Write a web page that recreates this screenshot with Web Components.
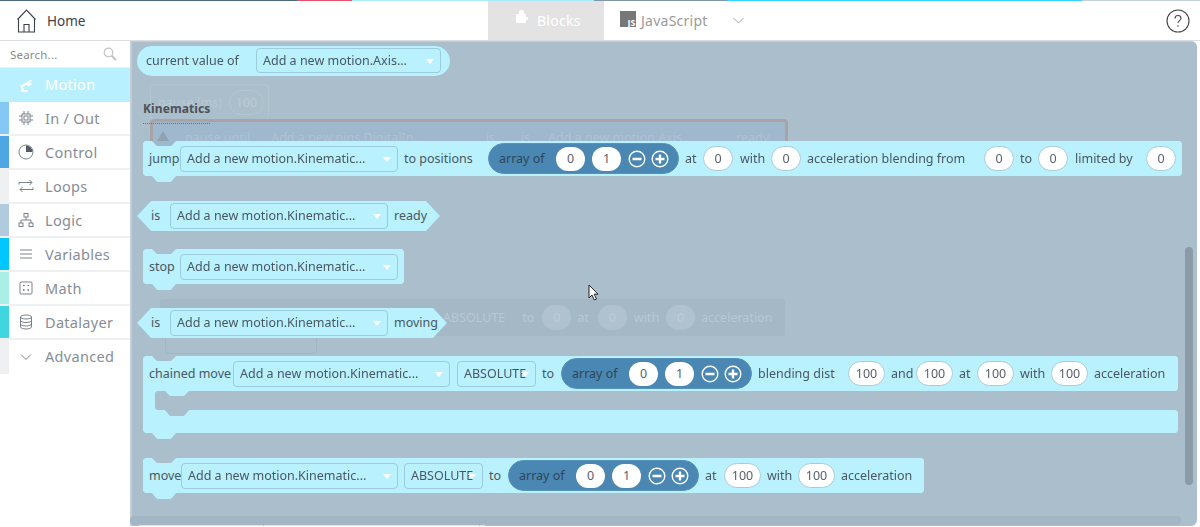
<!DOCTYPE html>
<html><head><meta charset="utf-8"><style>
html,body{margin:0;height:100%;overflow:hidden;background:#fff;font-family:"Noto Sans","Liberation Sans",sans-serif}
</style></head><body>
<x-app>
<x-stripe slot="top"></x-stripe>
<x-header slot="top"></x-header>
<x-sidebar slot="side">
  <x-search></x-search>
  <x-cat active color="#b9f0ff" icon="motion">Motion</x-cat>
  <x-cat color="#85c8f5" icon="chip">In / Out</x-cat>
  <x-cat color="#4ea6e3" icon="clock">Control</x-cat>
  <x-cat color="#eef0f1" icon="loop">Loops</x-cat>
  <x-cat color="#b2cade" icon="tree">Logic</x-cat>
  <x-cat color="#00c8ff" icon="lines">Variables</x-cat>
  <x-cat color="#a9efe6" icon="calc">Math</x-cat>
  <x-cat color="#3fd6e0" icon="db">Datalayer</x-cat>
  <x-cat last color="#eef0f1" icon="chev">Advanced</x-cat>
</x-sidebar>
<x-canvas slot="main">
  <x-ghost style="left:20px;top:43px;width:119px;height:36px;border:1px solid #b3c4d1;border-radius:4px"><span style="margin-left:7px">pause (ms)</span><x-num w="35" style="background:transparent;border-color:#b5c5d1;color:#bccad5;margin-left:7px">100</x-num></x-ghost>
  <x-ghost style="left:20px;top:78px;width:638px;height:40px;border:3px solid #a9a3a6;border-radius:4px;background:#9fb8cd;align-items:flex-start;padding-top:7px;color:#aec3d3"><svg width="12" height="10" viewBox="0 0 12 10" style="margin:2px 0 0 4px"><path d="M6 0 12 10H0z" fill="#8fa3b3"/></svg><span style="margin-left:16px">pause until</span><span style="margin-left:21px">Add a new pins.DigitalIn...</span><span style="margin-left:62px">is</span><span style="margin-left:26px">is</span><span style="margin-left:18px">Add a new motion.Axis...</span><span style="margin-left:44px">ready</span></x-ghost>
  <x-ghost style="left:30px;top:258px;width:625px;height:37px;background:#a5b8c6;border-radius:3px"><span style="margin-left:283px">ABSOLUTE</span><span style="margin-left:17px">to</span><x-num w="29" style="background:#b0c2cf;border:0;color:#bfcdd8;margin-left:8px">0</x-num><span style="margin-left:6px">at</span><x-num w="29" style="background:#b0c2cf;border:0;color:#bfcdd8;margin-left:9px">0</x-num><span style="margin-left:7px">with</span><x-num w="29" style="background:#b0c2cf;border:0;color:#bfcdd8;margin-left:7px">0</x-num><span style="margin-left:6px">acceleration</span></x-ghost>
  <x-ghost style="left:35px;top:295px;width:152px;height:18px;border:1px solid #a2b5c3;border-radius:0 0 4px 4px;border-top:0"></x-ghost>

  <x-block type="pill" x="7" y="5" w="313" h="30">
    <span style="margin-left:9px;width:110px">current value of</span><x-drop w="185" h="25">Add a new motion.Axis...</x-drop>
  </x-block>
  <x-label style="left:13px;top:60px">Kinematics</x-label>

  <x-block type="stack" x="13" y="100" w="1039" h="41">
    <span style="margin-left:6px;width:31px">jump</span><x-drop w="218">Add a new motion.Kinematic...</x-drop>
    <span style="margin-left:6px;width:84px">to positions</span>
    <x-array></x-array>
    <span style="margin-left:6px;width:18px">at</span><x-num w="30">0</x-num>
    <span style="margin-left:7px;width:31px">with</span><x-num w="30">0</x-num>
    <span style="margin-left:6px;width:177px">acceleration blending from</span><x-num w="30">0</x-num>
    <span style="margin-left:6px;width:18px">to</span><x-num w="30">0</x-num>
    <span style="margin-left:7px;width:71px">limited by</span><x-num w="30">0</x-num>
  </x-block>

  <x-block type="hex" x="7" y="160" w="303" h="30">
    <span style="margin-left:14px;width:19px">is</span><x-drop w="218">Add a new motion.Kinematic...</x-drop><span style="margin-left:6px">ready</span>
  </x-block>

  <x-block type="stack" x="13" y="208" w="261" h="41">
    <span style="margin-left:6px;width:31px">stop</span><x-drop w="218">Add a new motion.Kinematic...</x-drop>
  </x-block>

  <x-block type="hex" x="7" y="267" w="310" h="30">
    <span style="margin-left:14px;width:19px">is</span><x-drop w="218">Add a new motion.Kinematic...</x-drop><span style="margin-left:6px">moving</span>
  </x-block>

  <x-block type="c" x="13" y="315" w="1035" h="83">
    <span style="margin-left:6px;width:84px">chained move</span><x-drop w="217">Add a new motion.Kinematic...</x-drop>
    <x-drop w="79" style="margin-left:7px">ABSOLUTE</x-drop>
    <span style="margin-left:6px;width:19px">to</span>
    <x-array></x-array>
    <span style="margin-left:6px;width:90px">blending dist</span><x-num w="37">100</x-num>
    <span style="margin-left:6px;width:25px">and</span><x-num w="37">100</x-num>
    <span style="margin-left:6px;width:18px">at</span><x-num w="37">100</x-num>
    <span style="margin-left:6px;width:31px">with</span><x-num w="37">100</x-num>
    <span style="margin-left:6px">acceleration</span>
  </x-block>

  <x-block type="stack" x="13" y="417" w="781" h="41">
    <span style="margin-left:6px;width:32px">move</span><x-drop w="217">Add a new motion.Kinematic...</x-drop>
    <x-drop w="79" style="margin-left:6px">ABSOLUTE</x-drop>
    <span style="margin-left:6px;width:19px">to</span>
    <x-array></x-array>
    <span style="margin-left:6px;width:19px">at</span><x-num w="37">100</x-num>
    <span style="margin-left:6px;width:31px">with</span><x-num w="37">100</x-num>
    <span style="margin-left:6px">acceleration</span>
  </x-block>

  <x-block type="pill" x="7" y="477" w="350" h="30">
    <span style="margin-left:9px;width:117px"></span><x-drop w="217" h="25"></x-drop>
  </x-block>

  <x-scrollbars></x-scrollbars>
  <x-cursor style="left:458px;top:243px"></x-cursor>
</x-canvas>
</x-app>
<script>
function def(name, css, html){
  customElements.define(name, class extends HTMLElement{
    constructor(){super();this.attachShadow({mode:'open'});}
    connectedCallback(){
      const h = typeof html==='function'?html(this):html;
      const c = typeof css==='function'?css(this):css;
      this.shadowRoot.innerHTML='<style>'+c+'</style>'+h;
    }
  });
}
def('x-app',`:host{display:grid;grid-template-columns:130px 1fr;grid-template-rows:41px 1fr;width:1200px;height:527px;overflow:hidden}
 .t{grid-column:1/3;display:flex;flex-direction:column}.s{min-height:0}.m{min-height:0;min-width:0}`,
 `<div class="t"><slot name="top"></slot></div><div class="s"><slot name="side"></slot></div><div class="m"><slot name="main"></slot></div>`);
def('x-stripe',`:host{display:flex;height:1px;flex:none}i{display:block;height:1px}`,
 [['#4a6b80',297],['#e8506a',55],['#a8ecfb',242],['#7f98a8',133],['#35d3ff',355],['#c2d0d8',118]].map(a=>`<i style="background:${a[0]};width:${a[1]}px"></i>`).join(''));
def('x-header',`:host{display:flex;align-items:stretch;height:39px;background:#fff;border-bottom:1px solid #d9dde0;color:#3c4248;font-size:13.5px}
 .home{display:flex;align-items:center;width:488px;box-sizing:border-box;padding-left:16px}
 .home svg{margin-right:10px}
 .tab{display:flex;align-items:center;box-sizing:border-box;font-size:14px;letter-spacing:.25px}
 .b{width:116px;background:#e3e3e3;color:#fff;padding-left:28px;gap:9px}
 .j{color:#9b9b9b;padding-left:16px;width:152px;gap:5px}
 .j .c{margin-left:20px}
 .sp{flex:1}.q{display:flex;align-items:center;padding-right:10px}`,
 `<div class="home"><svg width="21" height="24" viewBox="0 0 21 24" fill="none" stroke="#3c4248" stroke-width="1.1"><path d="M1.5 10.5 10.5 1l9 9.5M2.5 9.5V23h16V9.500M8 23v-7.500h5V23"/></svg><span>Home</span></div>
 <div class="tab b"><svg width="12" height="15" viewBox="0 0 12 15" fill="#fff" style="margin-top:-6px"><path d="M0 4h3c-.6-2 .4-4 2.500-4S8.600 2 8 4h2v3.200c1.500-.6 2 .6 2 1.300s-.5 1.900-2 1.300V13H0z"/></svg><span>Blocks</span></div>
 <div class="tab j"><svg width="16" height="16" viewBox="0 0 16 16" style="margin-top:-4px"><rect width="16" height="16" fill="#777"/><text x="15.500" y="14.500" text-anchor="end" font-size="9" font-weight="700" font-family="Noto Sans" fill="#fff" letter-spacing="0">JS</text></svg><span>JavaScript</span>
 <svg class="c" width="11" height="7" viewBox="0 0 11 7" fill="none" stroke="#a6a6a6"><path d="M.5 1 5.500 6l5-5"/></svg></div>
 <div class="sp"></div>
 <div class="q"><svg width="24" height="24" viewBox="0 0 24 24"><circle cx="12" cy="12" r="11" fill="none" stroke="#444" stroke-width="1.100"/><path d="M9 9.500c0-2 1.300-3 3-3s3 1 3 2.800c0 2.200-3 2.400-3 4.700" fill="none" stroke="#444" stroke-width="1.100"/><circle cx="12" cy="17" r=".8" fill="#444"/></svg></div>`);
def('x-sidebar',`:host{display:block;height:100%;background:#fff}`,`<slot></slot>`);
def('x-search',`:host{display:flex;align-items:center;justify-content:space-between;height:27px;box-sizing:border-box;padding:0 13px 0 10px;font-size:11.500px;color:#8c8c8c;letter-spacing:.2px;border-bottom:1px solid #eee}`,
 `<span>Search...</span><svg width="14" height="14" viewBox="0 0 14 14" fill="none" stroke="#c4c4c4" stroke-width="1.200"><circle cx="5.500" cy="5.500" r="4.300"/><path d="M8.700 8.700 13 13" stroke-width="2"/></svg>`);
const ICONS={
 motion:'<path d="M3 14h6.500M5 13 3.500 9.500 9.500 6l1.500 3M3.500 9.500 5 12.500M9.500 6 13 3.500M10 8l3.500-1" stroke="#fff" stroke-width="2"/>',
 chip:'<rect x="4" y="4" width="8" height="8"/><rect x="6" y="6" width="4" height="4"/><path d="M1 6h3M1 10h3M12 6h3M12 10h3M6 1v3M10 1v3M6 12v3M10 12v3"/>',
 clock:'<circle cx="8" cy="8" r="7"/><path d="M8 8V1.500A6.500 6.500 0 0 1 14.500 8z" fill="#555c66" stroke="none"/>',
 loop:'<path d="M1 6.500V4.500h13M11.500 2l2.500 2.500L11.500 7M15 9.500v2H2M4.500 14 2 11.500 4.500 9"/>',
 tree:'<rect x="6" y="1.500" width="4" height="3.500"/><rect x="1" y="11" width="4" height="3.500"/><rect x="11" y="11" width="4" height="3.500"/><path d="M8 5v3M3 11V8h10v3"/>',
 lines:'<path d="M2 4h12M2 8h12M2 12h12"/>',
 calc:'<rect x="2" y="2" width="12" height="12" rx="1"/><path d="M5 5.500h1.500M9.500 5.500H11M5 10h1.500M9.500 10H11M5.800 4.800v1.500M5.800 9.300v1.500M10.200 9.300v1.500" stroke-width="1"/>',
 db:'<ellipse cx="8" cy="3" rx="5.500" ry="2"/><path d="M2.500 3v10c0 1 2.500 2 5.500 2s5.500-1 5.500-2V3M2.500 6.500c0 1 2.500 2 5.500 2s5.500-1 5.500-2M2.500 10c0 1 2.500 2 5.500 2s5.500-1 5.500-2"/>',
 chev:'<path d="M3 5.500 8 10.500l5-5"/>'};
def('x-cat',t=>{const a=t.hasAttribute('active'),l=t.hasAttribute('last');return `:host{display:flex;align-items:center;height:34px;box-sizing:border-box;font-size:14.5px;letter-spacing:.3px;color:${a?'#fff':'#868d98'};background:${a?t.getAttribute('color'):'#fff'};border-bottom:${a||l?'0':'2px solid #eef0f1'}}
 .c{width:9px;align-self:stretch;background:${t.getAttribute('color')}}
 svg{margin:0 11px 0 9px;flex:none}
 .t{padding-bottom:${a||l?'2px':'0'}}`},
 t=>`<div class="c"></div><svg width="16" height="16" viewBox="0 0 16 16" fill="none" stroke="#6e7580" stroke-width=".9">${ICONS[t.getAttribute('icon')]}</svg><span class="t"><slot></slot></span>`);
def('x-canvas',`:host{display:block;position:relative;height:calc(100% - 1px);background:#abbecc;box-shadow:inset 2px 1px 0 #c4cdd3;border-radius:0 6px 6px 0;margin-right:3px;overflow:hidden;box-sizing:border-box;font-size:12.5px}`,`<slot></slot>`);
def('x-label',`:host{position:absolute;font-weight:700;font-size:12px;color:#4d5358;border-bottom:1px dotted #66707a;padding-bottom:6px;line-height:16px;letter-spacing:.1px}`,`<slot></slot>`);
def('x-ghost',`:host{position:absolute;display:flex;align-items:center;box-sizing:border-box;color:#b8c8d4;font-size:12.500px;white-space:nowrap}`,`<slot></slot>`);
const SHAPES={
 stack:'polygon(2px 0,9px 0,14px 5px,28px 5px,33px 0,calc(100% - 2px) 0,100% 2px,100% calc(100% - 8px),calc(100% - 2px) calc(100% - 6px),33px calc(100% - 6px),28px 100%,14px 100%,9px calc(100% - 6px),2px calc(100% - 6px),0 calc(100% - 8px),0 2px)',
 hex:'polygon(14px 0,calc(100% - 14px) 0,100% 50%,calc(100% - 14px) 100%,14px 100%,0 50%)',
 c:'polygon(2px 0,9px 0,14px 5px,28px 5px,33px 0,calc(100% - 2px) 0,100% 2px,100% 33px,calc(100% - 2px) 35px,46px 35px,41px 40px,27px 40px,22px 35px,14px 35px,12px 37px,12px 52px,14px 54px,22px 54px,27px 60px,41px 60px,46px 54px,calc(100% - 2px) 54px,100% 56px,100% 75px,calc(100% - 2px) 77px,33px 77px,28px 83px,14px 83px,9px 77px,2px 77px,0 75px,0 2px)',
 pill:'none'};
def('x-block',t=>{const ty=t.getAttribute('type');
 return `:host{position:absolute;left:${t.getAttribute('x')}px;top:${t.getAttribute('y')}px;width:${t.getAttribute('w')}px;height:${t.getAttribute('h')}px;color:#4a5760;filter:drop-shadow(0 0 .6px #86bccf);white-space:nowrap}
 .b{box-sizing:border-box;width:100%;height:100%;background:#b9f1ff;clip-path:${SHAPES[ty]};${ty==='pill'?'border-radius:15px;':''}}
 .r{display:flex;align-items:center;height:${ty==='hex'||ty==='pill'?'calc(100% - 1px)':'35px'}}`},
 `<div class="b"><div class="r"><slot></slot></div></div>`);
def('x-drop',t=>`:host{display:flex;align-items:center;box-sizing:border-box;flex:none;position:relative;width:${t.getAttribute('w')}px;height:${t.getAttribute('h')||26}px;border:1px solid #9bcbdc;border-radius:4px;padding-left:6px;overflow:hidden;white-space:nowrap;color:#4a5760}
 i{position:absolute;right:6px;top:50%;margin-top:-2px;border:4px solid transparent;border-top:5px solid #fff;border-bottom:0}`,`<slot></slot><i></i>`);
def('x-num',t=>`:host{display:flex;align-items:center;justify-content:center;box-sizing:border-box;flex:none;width:${t.getAttribute('w')}px;height:25px;background:#fff;border:1px solid #a7cbd8;border-radius:12.500px;color:#59616a;font-size:12.500px}`,`<slot></slot>`);
def('x-array',`:host{display:flex;align-items:center;box-sizing:border-box;flex:none;width:191px;height:31px;background:#4a87b3;border-radius:15.500px;color:#2f4658;font-size:12.500px;padding-left:10px;border:1px solid #5692bb}
 span{width:57px}.n{display:flex;align-items:center;justify-content:center;width:29px;height:24px;border-radius:12px;background:#fff;color:#59616a;margin-right:7px}
 svg{margin-right:5px}`,
 `<span>array of</span><div class="n">0</div><div class="n">1</div>
 <svg width="18" height="18" viewBox="0 0 18 18"><circle cx="9" cy="9" r="7.800" fill="none" stroke="#fff" stroke-width="1.400"/><path d="M4.500 9h9" stroke="#fff" stroke-width="2.400"/></svg>
 <svg width="18" height="18" viewBox="0 0 18 18"><circle cx="9" cy="9" r="7.800" fill="none" stroke="#fff" stroke-width="1.400"/><path d="M4.500 9h9M9 4.500v9" stroke="#fff" stroke-width="2.400"/></svg>`);
def('x-scrollbars',`:host{position:absolute;inset:0;pointer-events:none}
 .v{position:absolute;right:4px;top:206px;width:8px;height:238px;border-radius:4px;background:#8a9ba7}
 .h{position:absolute;left:0;right:16px;bottom:1px;height:9px;border-radius:4px;background:#a3b6c4}`,`<div class="h"></div><div class="v"></div>`);
def('x-cursor',`:host{position:absolute;display:block;width:12px;height:18px}`,`<svg width="12" height="18" viewBox="0 0 12 18"><path d="M1 1v13l3-3 2.300 5 2.200-1-2.300-4.800H10z" fill="#fff" stroke="#222" stroke-width="1"/></svg>`);
</script>
</body></html>
